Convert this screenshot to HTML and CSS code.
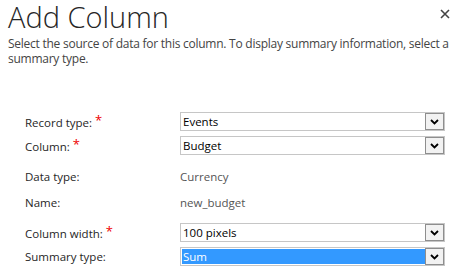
FILE: index.html
```html
<!DOCTYPE html>
<html lang="en">
<head>
    <meta charset="UTF-8">
    <title>Add Column</title>
    <link rel="stylesheet" href="styles.css">
</head>
<body>
    <div class="dialog">
        <div class="header">
            <h1>Add Column</h1>
            <span class="close">
                <svg width="10" height="10" viewBox="0 0 10 10"><path d="M1 1L9 9M9 1L1 9" stroke="#444" stroke-width="1.6"/></svg>
            </span>
        </div>
        <p class="intro">Select the source of data for this column. To display summary information, select a summary type.</p>

        <div class="form">
            <div class="row row-record">
                <label>Record type:<span class="req">*</span></label>
                <div class="select"><span class="value">Events</span><span class="arrow"><svg width="9" height="6" viewBox="0 0 9 6"><path d="M1 1L4.5 4.5L8 1" fill="none" stroke="#000" stroke-width="1.8"/></svg></span></div>
            </div>
            <div class="row">
                <label>Column:<span class="req">*</span></label>
                <div class="select"><span class="value">Budget</span><span class="arrow"><svg width="9" height="6" viewBox="0 0 9 6"><path d="M1 1L4.5 4.5L8 1" fill="none" stroke="#000" stroke-width="1.8"/></svg></span></div>
            </div>
            <div class="row row-text row-datatype">
                <label>Data type:</label>
                <span class="text-value">Currency</span>
            </div>
            <div class="row row-text row-name">
                <label>Name:</label>
                <span class="text-value">new_budget</span>
            </div>
            <div class="row row-width">
                <label>Column width:<span class="req">*</span></label>
                <div class="select"><span class="value">100 pixels</span><span class="arrow"><svg width="9" height="6" viewBox="0 0 9 6"><path d="M1 1L4.5 4.5L8 1" fill="none" stroke="#000" stroke-width="1.8"/></svg></span></div>
            </div>
            <div class="row">
                <label>Summary type:</label>
                <div class="select selected"><span class="value">Sum</span><span class="arrow"><svg width="9" height="6" viewBox="0 0 9 6"><path d="M1 1L4.5 4.5L8 1" fill="none" stroke="#000" stroke-width="1.8"/></svg></span></div>
            </div>
        </div>
    </div>
</body>
</html>
```

FILE: styles.css
```css
body {
    margin: 0;
    background-color: white;
    font-family: "Open Sans", "Noto Sans", sans-serif;
    color: #262626;
}
.dialog {
    width: 469px;
    height: 276px;
    padding: 0 0 0 8px;
    box-sizing: border-box;
}
.header {
    display: flex;
    justify-content: space-between;
    align-items: flex-start;
}
h1 {
    margin: 0;
    font-size: 29px;
    font-weight: 300;
    line-height: 34px;
    color: #262626;
}
.close {
    display: flex;
    margin: 9px 19px 0 0;
}
.intro {
    margin: 2px 0 0 0;
    width: 461px;
    font-size: 12px;
    line-height: 15px;
    color: #444;
    letter-spacing: -0.25px;
}
.form {
    display: flex;
    flex-direction: column;
    padding-left: 17px;
    margin-top: 46px;
}
.row {
    display: flex;
    align-items: center;
    height: 19px;
    margin-top: 5px;
}
.row-record {
    margin-top: 0;
}
.row-datatype {
    margin-top: 12px;
}
.row-name {
    margin-top: 7px;
}
.row-width {
    margin-top: 11px;
}
label {
    width: 155px;
    font-size: 11.5px;
    color: #262626;
}
.req {
    color: #e00;
    font-size: 13px;
    margin-left: 3px;
    position: relative;
    top: -2px;
}
.text-value {
    font-size: 11.5px;
    color: #555;
}
.select {
    display: flex;
    width: 265px;
    height: 19px;
    box-sizing: border-box;
    border: 1px solid #c6c6c6;
    background: white;
}
.select .value {
    flex: 1;
    padding-left: 2px;
    font-size: 11.5px;
    line-height: 17px;
    color: #000;
}
.select.selected .value {
    background: #3399ff;
    color: white;
    margin: 1px 0 1px 1px;
    line-height: 15px;
    padding-left: 1px;
}
.arrow {
    width: 19px;
    box-sizing: border-box;
    border: 1px solid #8e8e8e;
    background: #f2f2f2;
    display: flex;
    align-items: center;
    justify-content: center;
}
```
